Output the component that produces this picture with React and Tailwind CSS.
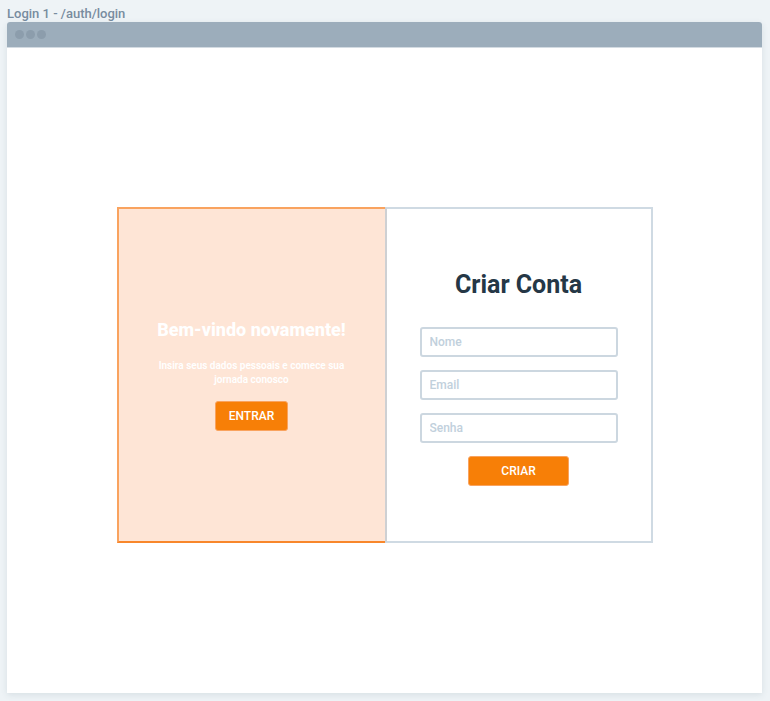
const fields = [
  { id: "name", label: "Nome", type: "text" },
  { id: "email", label: "Email", type: "email" },
  { id: "password", label: "Senha", type: "password" },
];

function TitleBar() {
  return (
    <div className="flex h-[25px] items-center gap-[2px] rounded-t-[3px] bg-[#9cadbb] pl-2">
      <span className="size-[9px] rounded-full bg-[#8c9dac]" />
      <span className="size-[9px] rounded-full bg-[#8c9dac]" />
      <span className="size-[9px] rounded-full bg-[#8c9dac]" />
    </div>
  );
}

function WelcomePanel() {
  return (
    <section className="flex flex-col items-center border-t-2 border-b-2 border-l-2 border-t-[#f9a35f] border-b-[#f8872b] border-l-[#f9a35f] bg-[#fee5d6] px-8 pt-[109px] text-center text-white">
      <h2 className="text-[18px] leading-6 font-extrabold whitespace-nowrap">Bem-vindo novamente!</h2>
      <p className="mt-[17px] text-[10px] leading-[14px] font-semibold whitespace-nowrap">
        Insira seus dados pessoais e comece sua
        <br />
        jornada conosco
      </p>
      <button
        type="button"
        className="mt-[14px] h-[30px] w-[73px] rounded-[3px] border border-[#f9a35f] bg-[#f77f07] text-[12px] font-medium"
      >
        ENTRAR
      </button>
    </section>
  );
}

function SignUpPanel() {
  return (
    <section className="flex flex-col items-center border-2 border-[#cfdae3] border-l-[#ced0d3] px-[33px] pt-[60px]">
      <h1 className="text-[25px] leading-8 font-bold text-[#253746]">Criar Conta</h1>
      <form className="mt-[26px] flex w-full flex-col items-center gap-[13px]">
        {fields.map((field) => (
          <input
            key={field.id}
            id={field.id}
            type={field.type}
            aria-label={field.label}
            placeholder={field.label}
            className="h-[30px] w-full rounded-[3px] border-2 border-[#ccd7e0] px-2 text-[12px] font-medium text-[#253746] outline-none placeholder:text-[#c1d0dc]"
          />
        ))}
        <button
          type="button"
          className="h-[30px] w-[101px] rounded-[3px] border border-[#f9a35f] bg-[#f77f07] text-[12px] font-medium text-white"
        >
          CRIAR
        </button>
      </form>
    </section>
  );
}

export default function App() {
  return (
    <div className="flex min-h-screen flex-col bg-[#eef3f6] px-[7px] pt-[6px] pb-2 font-['Roboto','Liberation_Sans',sans-serif]">
      <p className="h-4 text-[13px] leading-4 font-medium text-[#788c9f]">Login 1 - /auth/login</p>
      <div className="mr-px flex flex-1 flex-col rounded-t-[3px] bg-white shadow-[0_2px_6px_rgba(60,90,110,0.12)]">
        <TitleBar />
        <main className="flex flex-1 items-center justify-center border-t border-[#d3dbe2] px-6 pt-2">
          <div className="grid min-h-[336px] w-full max-w-[536px] grid-cols-2">
            <WelcomePanel />
            <SignUpPanel />
          </div>
        </main>
      </div>
    </div>
  );
}
